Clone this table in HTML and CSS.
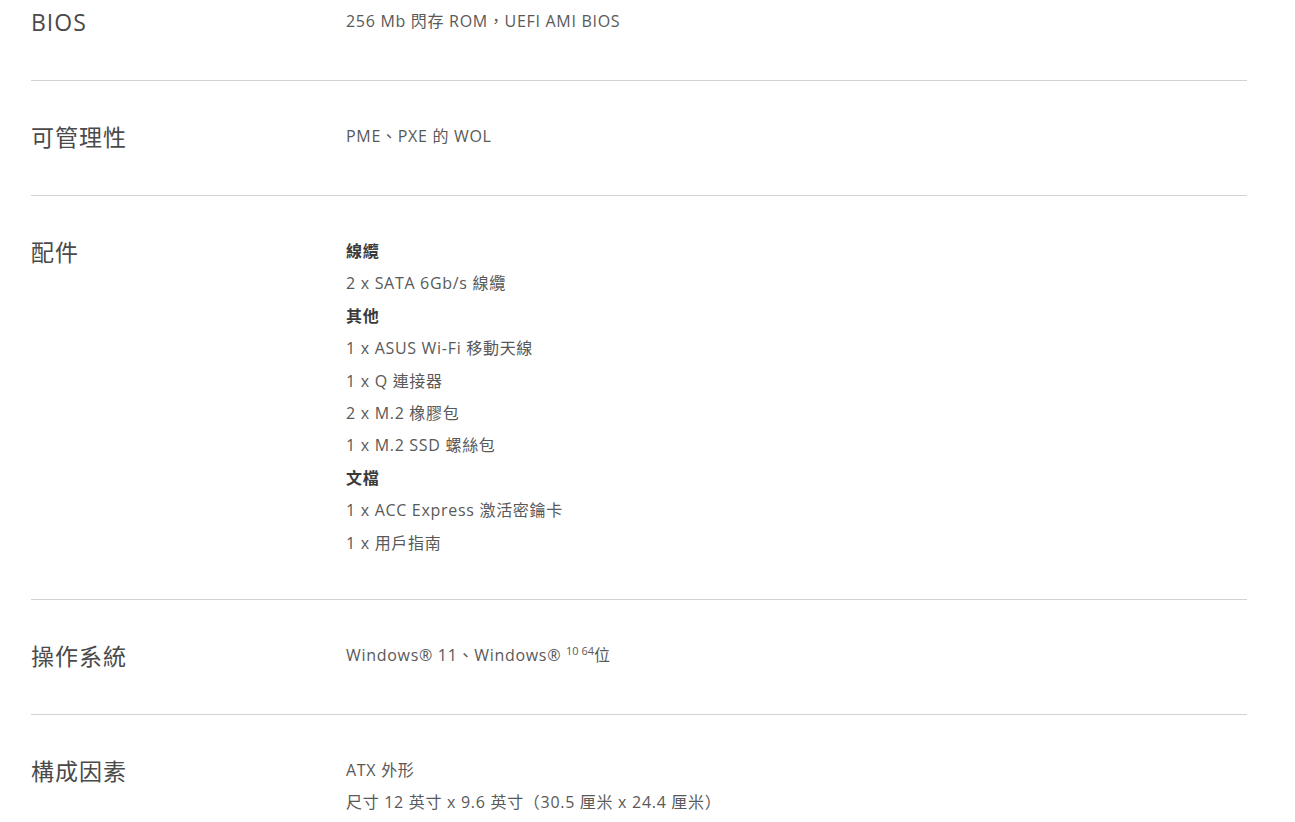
FILE: index.html
```html
<!DOCTYPE html>
<html lang="zh-Hant">
<head>
<meta charset="utf-8">
<title>規格</title>
<link rel="stylesheet" href="styles.css">
</head>
<body>
<div class="specs">
  <div class="row first">
    <div class="label">BIOS</div>
    <div class="value"><p>256 Mb 閃存 ROM，UEFI AMI BIOS</p></div>
  </div>
  <div class="row">
    <div class="label">可管理性</div>
    <div class="value"><p>PME、PXE 的 WOL</p></div>
  </div>
  <div class="row">
    <div class="label">配件</div>
    <div class="value">
      <p class="head">線纜</p>
      <p>2 x SATA 6Gb/s 線纜</p>
      <p class="head">其他</p>
      <p>1 x ASUS Wi-Fi 移動天線</p>
      <p>1 x Q 連接器</p>
      <p>2 x M.2 橡膠包</p>
      <p>1 x M.2 SSD 螺絲包</p>
      <p class="head">文檔</p>
      <p>1 x ACC Express 激活密鑰卡</p>
      <p>1 x 用戶指南</p>
    </div>
  </div>
  <div class="row">
    <div class="label">操作系統</div>
    <div class="value"><p>Windows® 11、Windows® <sup>10 64</sup>位</p></div>
  </div>
  <div class="row last">
    <div class="label">構成因素</div>
    <div class="value">
      <p>ATX 外形</p>
      <p>尺寸 12 英寸 x 9.6 英寸（30.5 厘米 x 24.4 厘米）</p>
    </div>
  </div>
</div>
</body>
</html>
```
FILE: styles.css
```css
html, body {
  margin: 0;
  padding: 0;
  background: #ffffff;
}
body {
  font-family: "Open Sans", "Noto Sans CJK TC", sans-serif;
  color: #555555;
}
.specs {
  width: 1216px;
  margin-left: 31px;
}
.row {
  display: grid;
  grid-template-columns: 315px 1fr;
  padding: 39px 0 40px;
  border-bottom: 1px solid #d2d2d2;
}
.row.first {
  padding-top: 5px;
}
.row.last {
  border-bottom: none;
}
.label {
  font-size: 23px;
  line-height: 35px;
  letter-spacing: 1px;
  color: #4a4a4a;
}
.value {
  font-size: 16px;
  line-height: 32.4px;
  letter-spacing: 0.7px;
  color: #595959;
}
.value p {
  margin: 0;
}
.value .head {
  font-weight: 700;
  color: #3a3a3a;
}
sup {
  font-size: 11px;
  line-height: 0;
  vertical-align: 6px;
  letter-spacing: 0;
}
```
